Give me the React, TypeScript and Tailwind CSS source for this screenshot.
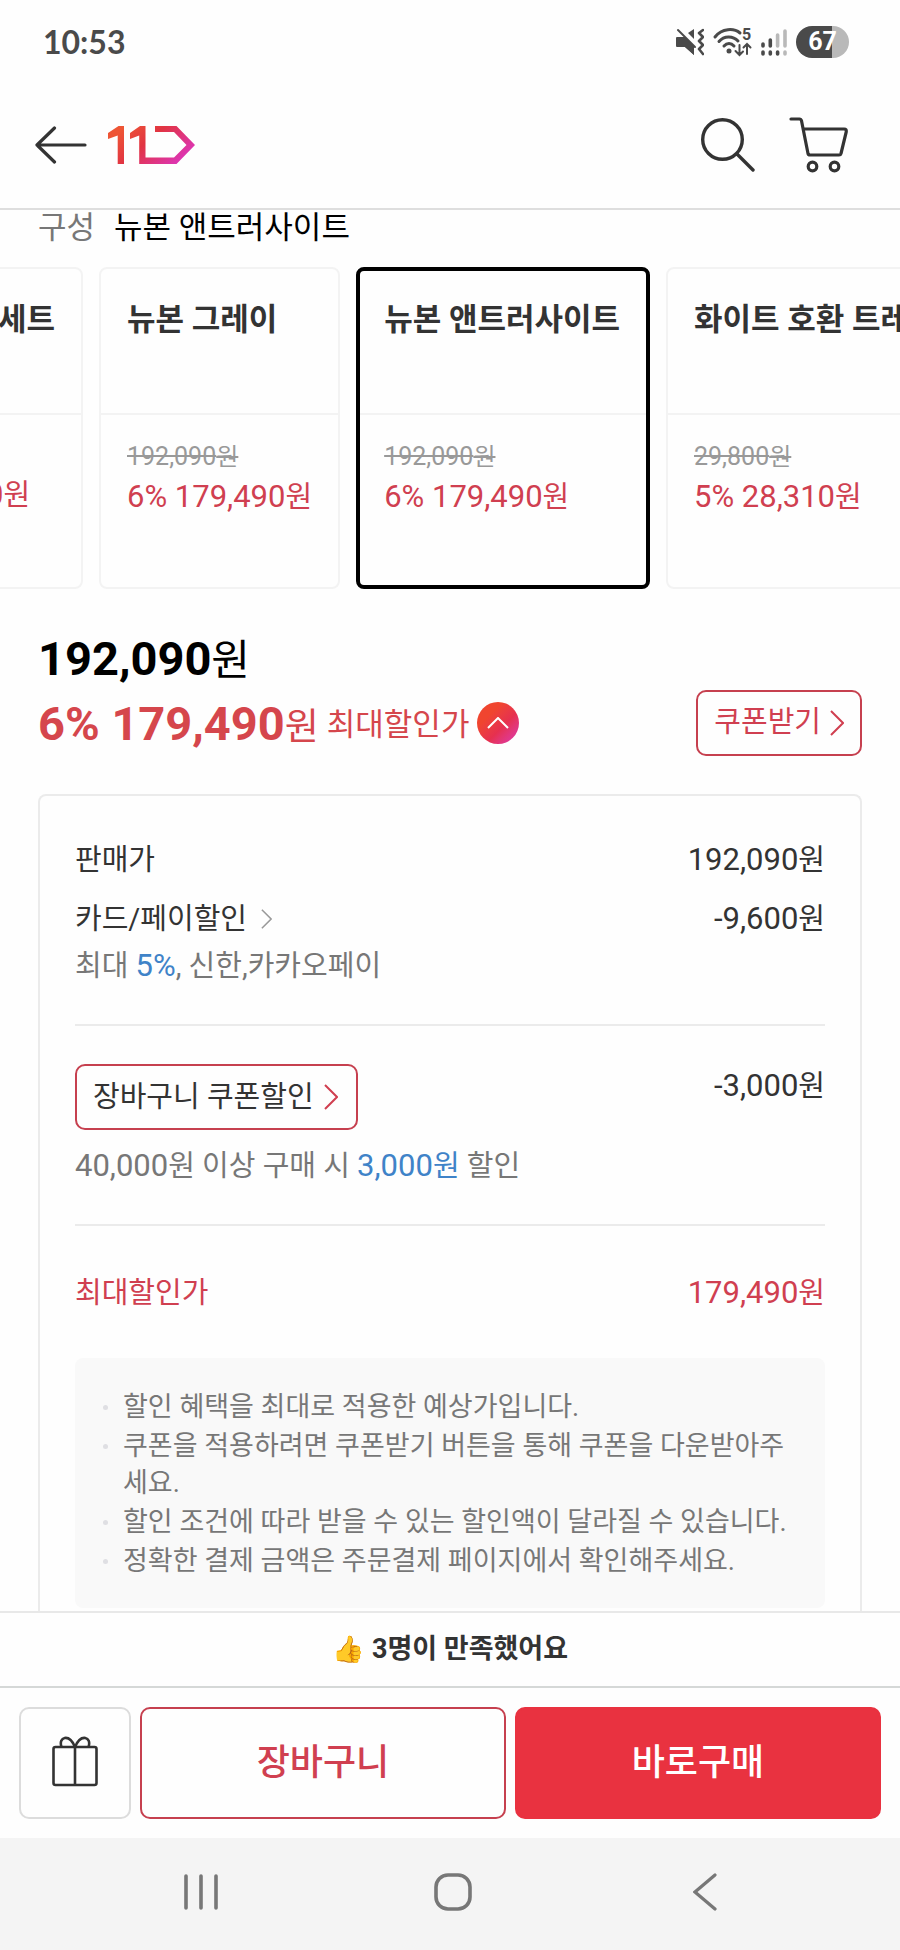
import React, { useState } from "react"
import clsx from "clsx"

interface OptionCard {
  name: string
  original?: string
  rate?: string
  price: string
}

const options: OptionCard[] = [
  { name: "뉴본 그레이", original: "192,090", rate: "6%", price: "179,490" },
  { name: "뉴본 앤트러사이트", original: "192,090", rate: "6%", price: "179,490" },
  { name: "화이트 호환 트레이", original: "29,800", rate: "5%", price: "28,310" },
]

const notes = [
  "할인 혜택을 최대로 적용한 예상가입니다.",
  "쿠폰을 적용하려면 쿠폰받기 버튼을 통해 쿠폰을 다운받아주세요.",
  "할인 조건에 따라 받을 수 있는 할인액이 달라질 수 있습니다.",
  "정확한 결제 금액은 주문결제 페이지에서 확인해주세요.",
]

// Digits are set slightly larger than the Korean text beside them
const Num = ({ children }: { children: React.ReactNode }) => <span className="text-[31px]">{children}</span>

const Won = ({ amount }: { amount: string }) => (
  <span className="whitespace-nowrap text-[29px] leading-[44px]">
    <Num>{amount}</Num>원
  </span>
)

const Chevron = ({ className, width = 2 }: { className: string; width?: number }) => (
  <svg viewBox="0 0 14 26" className={className} fill="none" stroke="currentColor" strokeWidth={width}>
    <path d="M1 1l12 12L1 25" />
  </svg>
)

const StatusBar = () => (
  <div className="flex h-[84px] items-center justify-between pl-[43px] pr-[51px] text-[#4a4a4a]">
    <span className="font-['Lato',sans-serif] text-[32px] font-bold leading-10">10:53</span>
    <div className="flex items-center gap-[9px]">
      {/* Muted, vibrate */}
      <svg viewBox="0 0 29 28" className="h-7 w-[29px]" fill="currentColor">
        <path d="M2 9h5l12 11v7l-9-8H2a1 1 0 0 1-1-1v-8a1 1 0 0 1 1-1z" />
        <path d="M4 9h6l9 9v9l-9-8H4z" />
        <path d="M13 5l6-4v10z" />
        <path d="M3 2l17 17" stroke="currentColor" strokeWidth="2" strokeLinecap="round" />
        <path
          d="M28 2l-4 3 4 4-4 4 4 4-4 4 4 5"
          fill="none"
          stroke="currentColor"
          strokeWidth="2.6"
          strokeLinecap="round"
          strokeLinejoin="round"
        />
      </svg>
      <svg viewBox="0 0 39 30" className="h-[30px] w-[39px] overflow-visible" fill="none" stroke="currentColor" strokeLinecap="round">
        <path d="M2 10C9 1 21 1 27 6" strokeWidth="3" />
        <path d="M6 14.500c5-6 14-6 19-.5" strokeWidth="3" />
        <path d="M11 19c3-3.500 7-3.500 10 0" strokeWidth="3" />
        <circle cx="16" cy="24" r="2.500" fill="currentColor" stroke="none" />
        <path d="M26.500 18v9.500m-4-3.500l4 4 3.500-3.500M34 27V17m-3.500 3.500L34 17l3.500 3.500" strokeWidth="2" />
        <text x="29" y="13" fontSize="16" fontWeight="700" fontFamily="Roboto, sans-serif" fill="currentColor" stroke="none">
          5
        </text>
      </svg>
      <svg viewBox="0 0 26 28" className="h-7 w-[26px]" fill="none" stroke="currentColor" strokeWidth="3.600" strokeLinecap="round">
        <path d="M2 16v2M2 24v2M9.300 12v6M9.300 24v2M16.600 24v2" />
        <path d="M16.600 7v11M24 3v15M24 24v2" stroke="#b9b9b9" />
      </svg>
      <div className="flex h-8 w-[53px] items-center justify-center rounded-full bg-linear-to-r from-[#4a4a4a] from-67% to-[#b9b9b9] to-67% font-['Roboto',sans-serif] text-[25px] font-bold leading-8 text-white">
        67
      </div>
    </div>
  </div>
)

const Header = () => (
  <header className="flex h-[126px] items-center border-b-2 border-[#dedede] pb-[2px] pl-[35px] pr-[52px] text-[#333]">
    <button aria-label="뒤로">
      <svg
        viewBox="0 0 52 38"
        className="h-[38px] w-[52px]"
        fill="none"
        stroke="currentColor"
        strokeWidth="3.200"
        strokeLinecap="round"
        strokeLinejoin="round"
      >
        <path d="M19.500 2L2 19l17.500 17M2 19h48" />
      </svg>
    </button>
    <a href="#" aria-label="11번가" className="ml-[21px]">
      <svg viewBox="0 0 87 38" className="h-[38px] w-[87px]" fill="url(#brand)">
        <defs>
          <linearGradient id="brand" gradientUnits="userSpaceOnUse" x1="18" y1="0" x2="58" y2="46">
            <stop offset="0" stopColor="#ee5535" />
            <stop offset="0.420" stopColor="#e13442" />
            <stop offset="1" stopColor="#dd35b0" />
          </linearGradient>
        </defs>
        <path d="M10.500 0H16v38H9.700V9.500L0 13V7z" />
        <path d="M32 0h5.500v31.500H66L78.500 19 66 6H47V0h21.500L87 19 68.500 38H31.200V9.500L22 13V7z" />
      </svg>
    </a>
    <button aria-label="검색" className="ml-auto">
      <svg viewBox="0 0 54 54" className="h-[54px] w-[54px]" fill="none" stroke="currentColor" strokeWidth="3.400" strokeLinecap="round">
        <circle cx="21.500" cy="21.500" r="19.800" />
        <path d="M36 36l16 16" />
      </svg>
    </button>
    <button aria-label="장바구니 보기" className="ml-[34px]">
      <svg
        viewBox="0 0 59 56"
        className="h-14 w-[59px]"
        fill="none"
        stroke="currentColor"
        strokeWidth="3.200"
        strokeLinecap="round"
        strokeLinejoin="round"
      >
        <path d="M2 2h8.500q1.500 0 2 1.800L19 36.500q.4 1.500 2 1.500h29q1.600 0 2-1.500L57.200 15q.5-3-2-3H14.500" />
        <circle cx="23.500" cy="49.500" r="4.300" />
        <circle cx="45.500" cy="49.500" r="4.300" />
      </svg>
    </button>
  </header>
)

const cardBase = "shrink-0 rounded-lg border-2 border-[#f3f3f3] text-left"

const OptionPicker = () => {
  const [selected, setSelected] = useState(1)

  return (
    <div className="flex h-[322px] gap-4 overflow-hidden">
      {/* Card scrolled past the left edge */}
      <button className={clsx(cardBase, "-ml-4 w-[99px]")}>
        <span className="block h-[146px] border-b-2 border-[#f3f3f3] pr-[26px] pt-[31px] text-right text-[31px] font-bold leading-10">
          세트
        </span>
        <span className="block h-[172px] pt-[58px] text-[#d03f50]">
          <Won amount="0" />
        </span>
      </button>
      {options.map((option, i) => (
        <button
          key={option.name}
          aria-pressed={i === selected}
          onClick={() => setSelected(i)}
          className={clsx(cardBase, i === selected && "outline-4 -outline-offset-4 outline-black")}
        >
          <span className="block h-[146px] whitespace-nowrap border-b-2 border-[#f3f3f3] pl-[26px] pr-[28px] pt-[31px] text-[31px] font-bold leading-10">
            {option.name}
          </span>
          <span className="block h-[172px] px-[26px] pt-6">
            <del className="block text-[24px] leading-9 text-[#999]">
              <span className="text-[25px]">{option.original}</span>원
            </del>
            <span className="block text-[#d03f50]">
              <Won amount={`${option.rate} ${option.price}`} />
            </span>
          </span>
        </button>
      ))}
    </div>
  )
}

const PriceBreakdown = () => (
  <section className="mt-[38px] rounded-t-lg border-2 border-b-0 border-[#ebebeb] px-[35px] pb-10 pt-[42px] text-[29px] leading-[44px]">
    <div className="flex justify-between">
      <span>판매가</span>
      <Won amount="192,090" />
    </div>
    <div className="mt-[15px] flex justify-between">
      <a href="#" className="flex items-center gap-[14px]">
        카드/페이할인
        <Chevron className="h-5 w-[11px] text-[#999]" />
      </a>
      <Won amount="-9,600" />
    </div>
    <p className="mt-[3px] text-[#777]">
      최대 <span className="text-[#3f83c8]"><Num>5%</Num></span>, 신한,카카오페이
    </p>

    <div className="mt-9 flex items-start justify-between border-t-2 border-[#ebebeb] pt-[38px]">
      <button className="flex h-[66px] items-center gap-[10px] rounded-[10px] border-2 border-[#c6404f] pl-4 pr-[18px]">
        장바구니 쿠폰할인
        <Chevron className="h-[26px] w-[14px] text-[#d03f50]" />
      </button>
      <Won amount="-3,000" />
    </div>
    <p className="mt-[14px] text-[#777]">
      <Num>40,000</Num>원 이상 구매 시{" "}
      <span className="text-[#3f83c8]"><Num>3,000</Num>원</span> 할인
    </p>

    <div className="mt-9 flex justify-between border-t-2 border-[#ebebeb] pt-[45px] text-[#d03f50]">
      <span>최대할인가</span>
      <Won amount="179,490" />
    </div>

    <ul className="mt-[43px] flex flex-col gap-[2px] rounded-lg bg-[#f9f9f9] pb-7 pl-[28px] pr-[30px] pt-[31px] text-[27px] leading-[37px] text-[#777]">
      {notes.map(note => (
        <li key={note} className="flex gap-[15px]">
          <span className="mt-4 h-[5px] w-[5px] shrink-0 rounded-full bg-[#dfdfe3]" />
          {note}
        </li>
      ))}
    </ul>
  </section>
)

const BottomBar = () => (
  <footer className="shrink-0">
    <p className="flex h-[75px] items-center justify-center gap-2 border-t-2 border-[#e8e8e8] text-[27px] font-bold">
      <span className="text-[26px]">👍</span>
      3명이 만족했어요
    </p>
    <div className="flex gap-[9px] border-t-2 border-[#d5d8d7] p-[19px] text-[36px] font-medium">
      <button
        aria-label="선물하기"
        className="flex h-[112px] w-[112px] shrink-0 items-center justify-center rounded-[10px] border-2 border-[#dcdcdc] pb-1"
      >
        <svg viewBox="0 0 46 52" className="h-[52px] w-[46px]" fill="none" stroke="currentColor" strokeWidth="2.600">
          <rect x="1.500" y="12" width="43" height="38" rx="2" />
          <path d="M23 12v38M9.500 12C6 2 17-2 23 12 29-2 40 2 36.500 12" />
        </svg>
      </button>
      <button className="h-[112px] flex-1 rounded-[10px] border-2 border-[#c6404f] text-[#d03f50]">장바구니</button>
      <button className="h-[112px] flex-1 rounded-[10px] border-2 border-[#e93240] bg-[#e93240] text-white">바로구매</button>
    </div>
    <nav className="flex h-28 items-center bg-[#f4f4f4] pb-1 pl-[75px] pr-[69px] text-[#777]">
      <button aria-label="최근 앱" className="flex flex-1 justify-center">
        <svg viewBox="0 0 36 38" className="h-[38px] w-9" fill="none" stroke="currentColor" strokeWidth="3.600" strokeLinecap="round">
          <path d="M3 3v32M18 3v32M33 3v32" />
        </svg>
      </button>
      <button aria-label="홈" className="flex flex-1 justify-center">
        <svg viewBox="0 0 38 38" className="h-[38px] w-[38px]" fill="none" stroke="currentColor" strokeWidth="3.600">
          <rect x="2" y="2" width="34" height="34" rx="12" />
        </svg>
      </button>
      <button aria-label="이전" className="flex flex-1 justify-center">
        <svg viewBox="0 0 24 38" className="h-[38px] w-6" fill="none" stroke="currentColor" strokeWidth="3.200" strokeLinecap="round">
          <path d="M22 2L2 19l20 17" />
        </svg>
      </button>
    </nav>
  </footer>
)

export default function App() {
  const [open, setOpen] = useState(true)

  return (
    <div className="flex h-screen flex-col overflow-hidden bg-[#fefefe] font-['Roboto','Noto_Sans_CJK_KR',sans-serif] text-[#333]">
      <StatusBar />
      <Header />
      <main className="min-h-0 flex-1 overflow-hidden">
        <p className="mb-[23px] flex gap-[19px] px-[38px] pt-[2px] text-[31px] leading-8">
          <span className="text-[#777]">구성</span>
          <span className="text-black">뉴본 앤트러사이트</span>
        </p>
        <OptionPicker />
        <div className="px-[38px] pt-[38px]">
          <p className="h-[63px] text-[42px] leading-[63px] text-black">
            <span className="text-[47px] font-bold">192,090</span>원
          </p>
          <div className="flex h-[66px] items-center justify-between">
            <div className="flex items-center text-[#d5464c]">
              <span className="whitespace-nowrap pt-[6px] text-[37px] leading-[66px]">
                <span className="text-[47px] font-bold">6% 179,490</span>원
              </span>
              <span className="ml-2 pt-1 text-[31px]">최대할인가</span>
              <button
                aria-label="할인 내역 접기"
                aria-expanded={open}
                onClick={() => setOpen(!open)}
                className="ml-2 flex h-[42px] w-[42px] items-center justify-center rounded-full bg-linear-to-br from-[#f0452f] from-30% via-[#e6304f] via-60% to-[#dd34b4]"
              >
                <svg viewBox="0 0 22 12" className="h-3 w-[22px]" fill="none" stroke="white" strokeWidth="2">
                  <path d="M1 11L11 1l10 10" />
                </svg>
              </button>
            </div>
            <button className="flex h-[66px] items-center gap-[9px] rounded-[10px] border-2 border-[#c6404f] px-4 text-[29px] text-[#d03f50]">
              쿠폰받기
              <Chevron className="h-[26px] w-[14px]" />
            </button>
          </div>
          {open && <PriceBreakdown />}
        </div>
      </main>
      <BottomBar />
    </div>
  )
}
